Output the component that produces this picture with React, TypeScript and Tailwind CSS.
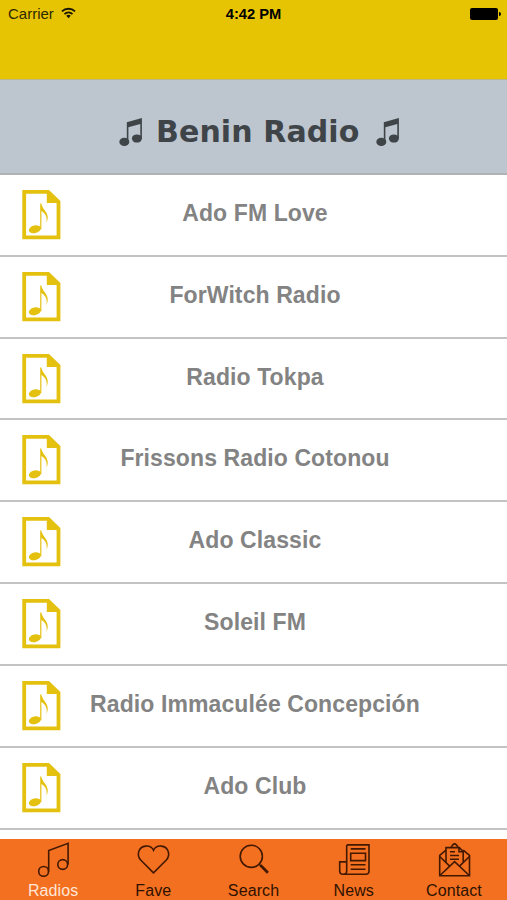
import React from 'react';

interface Tab {
  label: string;
  icon: React.ReactNode;
  active?: boolean;
}

const stations: string[] = [
  'Ado FM Love',
  'ForWitch Radio',
  'Radio Tokpa',
  'Frissons Radio Cotonou',
  'Ado Classic',
  'Soleil FM',
  'Radio Immaculée Concepción',
  'Ado Club',
];

const tabs: Tab[] = [
  {
    label: 'Radios',
    active: true,
    icon: (
      <>
        <circle cx="8.6" cy="32.4" r="4.9" />
        <circle cx="27.7" cy="25.5" r="4.9" />
        <path d="M13.7 32.400V11.500L33.100 4.300v21.200" />
      </>
    ),
  },
  {
    label: 'Fave',
    icon: <path d="M18.500 33.900 5.700 21C1.500 16.500 3 7.800 10.700 7.100c3.600-.3 6.600 1.500 7.800 4.200 1.200-2.700 4.200-4.500 7.800-4.200C34 7.800 35.500 16.500 31.300 21Z" />,
  },
  {
    label: 'Search',
    icon: (
      <>
        <circle cx="15.3" cy="17.3" r="11.1" />
        <path d="m23.200 25.200 2 2" />
        <path d="m24.500 26.200 7.400 7.600" strokeWidth="2.7" />
      </>
    ),
  },
  {
    label: 'News',
    icon: (
      <>
        <path d="M10.700 5.900h22.300v26.100q0 3.300-3.300 3.300H6.900Q3.700 35.300 3.700 32V22.900h7M10.700 5.900v26.100q0 3.300-3.500 3.300" />
        <path d="M14.700 14.200h14.800v7.400H14.700zM14.700 9.900h14.800M14.700 25.700h14.800M14.700 30.200h14.800" />
      </>
    ),
  },
  {
    label: 'Contact',
    icon: (
      <>
        <path d="M10 11.200 3.700 16.400v20.300h29.800V16.400l-6.300-5.200M14.800 8.600 16.700 6q1.900-2.200 3.800 0l1.900 2.600" />
        <path d="m3.700 17.500 9.700 9.300M33.500 17.500l-9.700 9.300M3.900 36.500 18.600 22.600 33.300 36.500M10 23.300V8.600h13.300l3.900 3.900v10.800" />
        <path d="M23 8.800v4h4M14 12.700h5M14 16.500h9M14 20.200h9" />
      </>
    ),
  },
];

function StatusBar() {
  return (
    <div className="grid h-[28px] grid-cols-3 items-center text-[15px] text-black">
      <div className="flex items-center gap-[7px] pl-2">
        <span className="text-[#2e2900]">Carrier</span>
        <svg className="-mt-[2px] h-[12px] w-[15px]" viewBox="0 0 16 12" fill="none" stroke="#1a1700" strokeWidth="2">
          <path d="M1 4.300a10.200 10.200 0 0 1 14 0M3.700 7.200a6.300 6.300 0 0 1 8.600 0" />
          <path d="M5.600 9a3.600 3.600 0 0 1 4.800 0L8 11.600Z" fill="#1a1700" stroke="none" />
        </svg>
      </div>
      <div className="pt-px text-center text-[14.7px] font-bold whitespace-nowrap">4:42 PM</div>
      <div className="flex items-center justify-end pr-[6px]">
        <div className="h-[12px] w-[28px] rounded-[2px] bg-black"></div>
        <div className="ml-px h-[4px] w-[2px] rounded-r-full bg-black"></div>
      </div>
    </div>
  );
}

function TitleNote() {
  return (
    <svg className="h-[30px] w-[24px]" viewBox="0 0 24 30" fill="#3e4448">
      <ellipse cx="5.3" cy="24.9" rx="5" ry="4.1" />
      <ellipse cx="17.9" cy="21.5" rx="5" ry="4.1" />
      <path d="M7.800 5.200 22.900 1v20.500h-1.600V6.900L9.400 10.200v15H7.800Z" />
    </svg>
  );
}

function StationIcon() {
  return (
    <svg className="h-[50px] w-[39px] shrink-0" viewBox="0 0 39 50" fill="#e5c10f">
      <path fillRule="evenodd" d="M.3 0h26.700L38.400 11v38.300H.3ZM4.100 3.800v41.700h30.500V13H24.800V3.800Z" />
      <ellipse cx="12.9" cy="39.3" rx="6.2" ry="3.8" transform="rotate(-14 12.9 39.3)" />
      <path d="M18.200 13.500h1.200c.6 6.500 9.800 9.500 5 19.700 1.200-5.200-.6-9.800-5-12.200V39h-1.200Z" />
    </svg>
  );
}

function StationRow({ name }: { name: string }) {
  return (
    <li className="flex h-[81.86px] items-start border-b-2 border-[#c3c3c3] bg-white">
      <div className="w-0 pt-[15px] pl-[22px]">
        <StationIcon />
      </div>
      <span className="-ml-[19px] flex-1 pt-[22px] text-center text-[23px] leading-[32px] font-bold tracking-[0.1px] whitespace-nowrap text-[#838383]">
        {name}
      </span>
    </li>
  );
}

export default function App() {
  return (
    <div className="flex h-[900px] w-[507px] flex-col overflow-hidden bg-white font-['Liberation_Sans',Arial,sans-serif]">
      <header className="h-[79px] shrink-0 bg-[#e7c403]">
        <StatusBar />
      </header>

      <div className="flex h-[95.9px] shrink-0 items-start justify-center border-t border-b-2 border-t-[#bcb78a] border-b-[#b0b3b5] bg-[#bdc5ce] pt-[37px] pl-[12px]">
        <TitleNote />
        <h1 className="mr-[12px] ml-[13px] w-[208px] text-[30px] leading-[30px] font-bold tracking-[0.1px] whitespace-nowrap text-[#3e4448] font-['DejaVu_Sans',Verdana,sans-serif]">
          Benin Radio
        </h1>
        <TitleNote />
      </div>

      <ul className="min-h-0 flex-1 overflow-hidden">
        {stations.map(name => <StationRow key={name} name={name} />)}
      </ul>

      <nav className="flex h-[61px] shrink-0 bg-[#f37021] px-[3px]">
        {tabs.map(tab => (
          <div key={tab.label} className="flex flex-1 flex-col items-center">
            <svg className="h-[40px] w-[36px] shrink-0" viewBox="0 0 36 40" fill="none" stroke="#421900" strokeWidth="1.6">
              {tab.icon}
            </svg>
            <span className={tab.active ? 'text-[16px] leading-[23px] tracking-[0.1px] text-[#ffe6d6]' : 'text-[16px] leading-[23px] tracking-[0.1px] text-[#2e1200]'}>
              {tab.label}
            </span>
          </div>
        ))}
      </nav>
    </div>
  );
}
